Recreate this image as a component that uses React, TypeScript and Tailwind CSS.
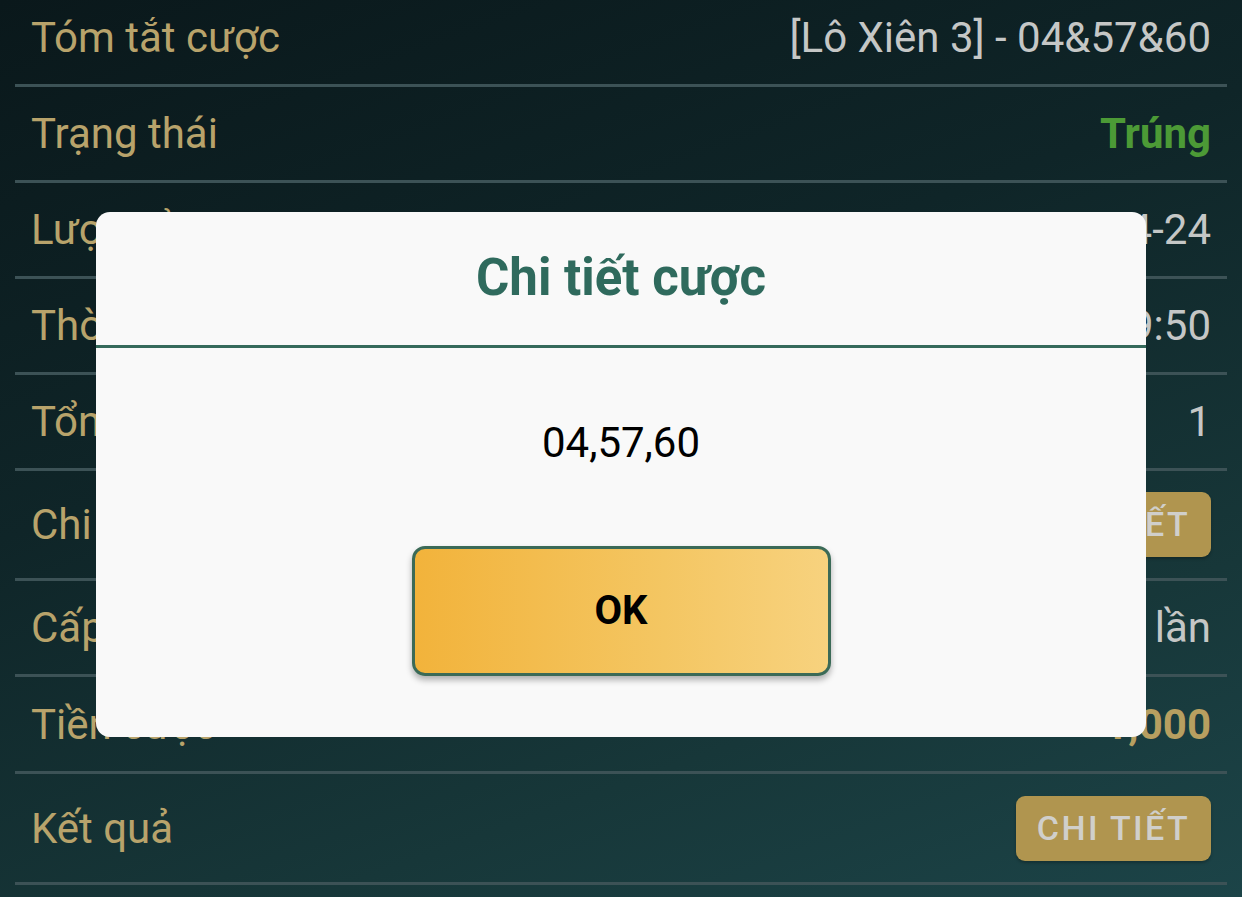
type Row =
    | { label: string; kind: 'text'; value: string; tone?: 'plain' | 'win' | 'money'; h: string }
    | { label: string; kind: 'button'; h: string }

const ROWS: Row[] = [
    { label: 'Tóm tắt cược', kind: 'text', value: '[Lô Xiên 3] - 04&57&60', h: 'h-[96px]' },
    { label: 'Trạng thái', kind: 'text', value: 'Trúng', tone: 'win', h: 'h-[96px]' },
    { label: 'Lượt xổ', kind: 'text', value: '2024-04-24', h: 'h-[96px]' },
    { label: 'Thời gian cược', kind: 'text', value: '2024-04-24 18:09:50', h: 'h-[96px]' },
    { label: 'Tổng số cược', kind: 'text', value: '1', h: 'h-[96px]' },
    { label: 'Chi tiết cược', kind: 'button', h: 'h-[110px]' },
    { label: 'Cấp số nhân', kind: 'text', value: '1 lần', h: 'h-[96px]' },
    { label: 'Tiền cược', kind: 'text', value: '1,000', tone: 'money', h: 'h-[97px]' },
    { label: 'Kết quả', kind: 'button', h: 'h-[111px]' },
]

function DetailButton() {
    return (
        <button
            type="button"
            className="h-[65px] w-[195px] rounded-[9px] bg-[#b0954f] text-[34px] font-medium tracking-[0.07em] text-[#d0cfcb] shadow-[0_2px_3px_rgba(0,0,0,0.25)]"
        >
            CHI TIẾT
        </button>
    )
}

function InfoRow({ row }: { row: Row }) {
    const valueClass =
        row.kind === 'text' && row.tone === 'win'
            ? 'font-bold text-[#4c9a36]'
            : row.kind === 'text' && row.tone === 'money'
              ? 'font-bold text-[#b79f60]'
              : 'text-[#c5c7c6]'
    return (
        <div className={`mx-[15px] flex items-center justify-between border-b-[3px] border-[#3c5256] px-4 ${row.h}`}>
            <span className="text-[#b8a36b]">{row.label}</span>
            {row.kind === 'button' ? <DetailButton /> : <span className={valueClass}>{row.value}</span>}
        </div>
    )
}

function BetDialog() {
    return (
        <div className="absolute left-[96px] top-[212px] flex h-[525px] w-[1050px] flex-col overflow-hidden rounded-[14px] bg-[#f9f9f9]">
            <div className="flex h-[133px] items-center justify-center">
                <h2 className="m-0 text-[51px] font-bold text-[#2f6a5d]">Chi tiết cược</h2>
            </div>
            <div className="h-[3px] bg-[#356a5b]" />
            <div className="flex flex-1 flex-col items-center">
                <p className="m-0 mt-[73px] text-[42px] leading-[44px] text-black">04,57,60</p>
                <button
                    type="button"
                    className="mt-[81px] h-[130px] w-[419px] rounded-[13px] border-[3px] border-[#3b6a57] bg-[linear-gradient(90deg,#f2b33b,#f4c662_60%,#f7d27e)] text-[40px] font-bold text-black shadow-[0_4px_6px_rgba(0,0,0,0.3)]"
                >
                    OK
                </button>
            </div>
        </div>
    )
}

export default function App() {
    return (
        <div
            className="relative h-[897px] w-full overflow-hidden bg-[linear-gradient(160deg,#0a181b_0%,#0f2528_40%,#173739_75%,#1c4448_100%)] text-[42px]"
            style={{ fontFamily: 'Roboto, "Noto Sans", sans-serif' }}
        >
            <div className="-mt-[9px] flex flex-col">
                {ROWS.map((row) => (
                    <InfoRow key={row.label} row={row} />
                ))}
            </div>
            <BetDialog />
        </div>
    )
}
